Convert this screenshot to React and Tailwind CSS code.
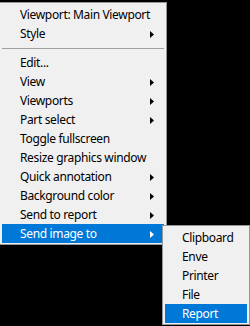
const mainItems = [
  { label: 'Viewport: Main Viewport' },
  { label: 'Style', sub: true },
  { sep: true },
  { label: 'Edit...' },
  { label: 'View', sub: true },
  { label: 'Viewports', sub: true },
  { label: 'Part select', sub: true },
  { label: 'Toggle fullscreen' },
  { label: 'Resize graphics window' },
  { label: 'Quick annotation', sub: true },
  { label: 'Background color', sub: true },
  { label: 'Send to report', sub: true },
  { label: 'Send image to', sub: true, active: true },
]

const subItems = ['Clipboard', 'Enve', 'Printer', 'File', 'Report']

function Arrow({ active }) {
  return (
    <svg width="4" height="7" viewBox="0 0 4 7" className="shrink-0">
      <path d="M0 0 L4 3.5 L0 7 Z" fill={active ? '#ffffff' : '#000000'} />
    </svg>
  )
}

export default function App() {
  return (
    <div className="relative w-[250px] h-[326px] overflow-hidden bg-black text-[12px] leading-none tracking-[-0.35px]" style={{ fontFamily: '"Noto Sans", "Liberation Sans", sans-serif' }}>
      {/* main context menu */}
      <div className="ml-[-1px] mt-[2px] w-[168px] border border-[#979797] bg-[#f0f0f0] px-[2px] pt-[2px] pb-[1px]">
        {mainItems.map((it, i) =>
          it.sep ? (
            <div key={i} className="h-[10px] flex items-center">
              <div className="h-px w-full bg-[#a0a0a0]" />
            </div>
          ) : (
            <div
              key={i}
              className={`h-[19px] flex items-center justify-between pl-[18px] pr-[10px] pt-px ${it.active ? 'bg-[#0078d7] text-white' : 'text-black'}`}
            >
              <span className="whitespace-nowrap">{it.label}</span>
              {it.sub && <Arrow active={it.active} />}
            </div>
          )
        )}
      </div>

      {/* flyout submenu */}
      <div className="absolute left-[162px] top-[225px] w-[88px] border border-[#979797] bg-[#f0f0f0] px-[2px] pt-[2px] pb-[1px]">
        {subItems.map((s) => (
          <div
            key={s}
            className={`h-[19px] flex items-center pl-[17px] pt-px ${s === 'Report' ? 'bg-[#0078d7] text-white' : 'text-black'}`}
          >
            {s}
          </div>
        ))}
      </div>
    </div>
  )
}
